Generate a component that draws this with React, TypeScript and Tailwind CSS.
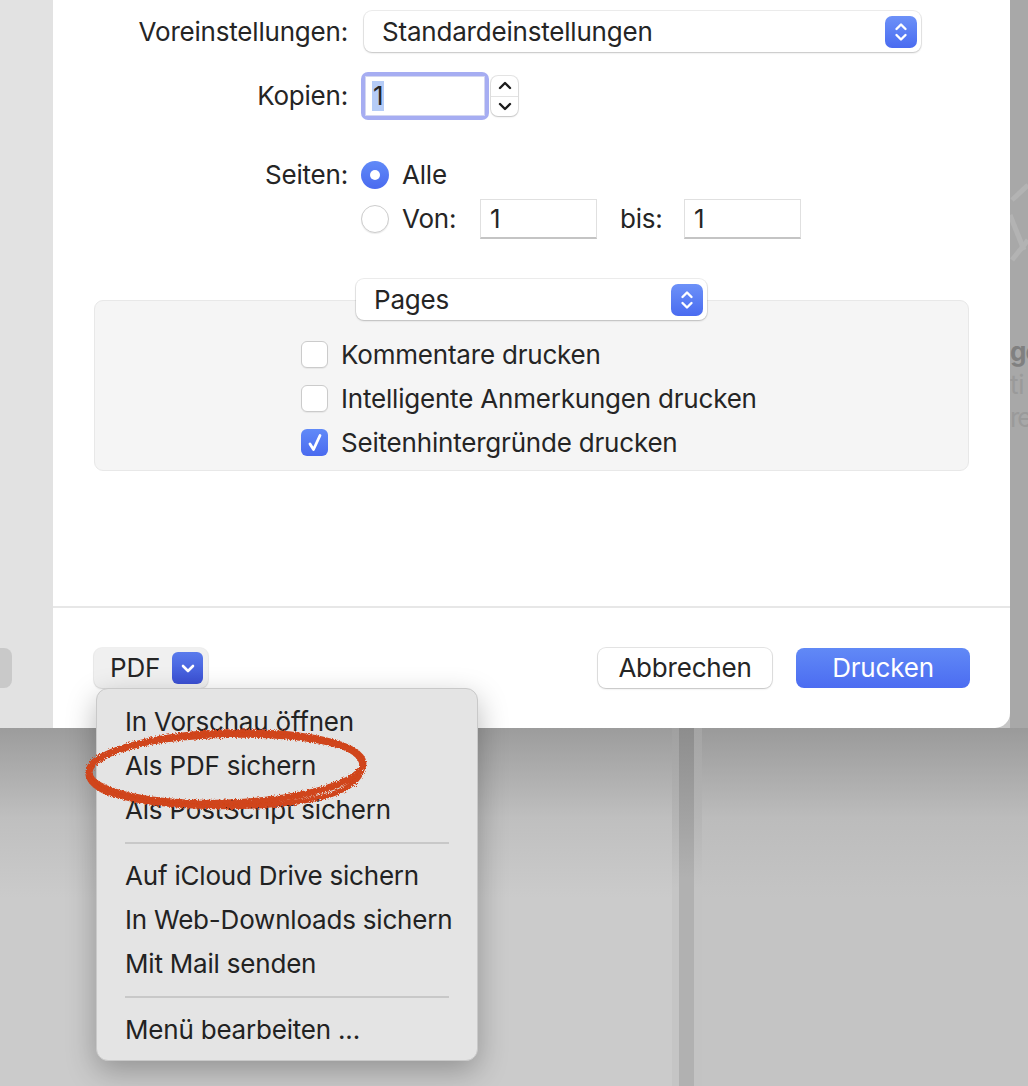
import React from 'react';

function UpDown() {
  return (
    <svg width="16" height="22" viewBox="0 0 16 22" fill="none" stroke="white" strokeWidth="2.4" strokeLinecap="round" strokeLinejoin="round">
      <path d="M3.5 8 L8 3.5 L12.5 8" />
      <path d="M3.5 14 L8 18.5 L12.5 14" />
    </svg>
  );
}

function Chevron({ up }: { up?: boolean }) {
  return (
    <svg width="14" height="9" viewBox="0 0 14 9" fill="none" stroke="#1c1c1c" strokeWidth="2.4" strokeLinecap="round" strokeLinejoin="round">
      {up ? <path d="M2 7 L7 2 L12 7" /> : <path d="M2 2 L7 7 L12 2" />}
    </svg>
  );
}

function PopupButton({ label, className }: { label: string; className: string }) {
  return (
    <div
      className={`flex h-[41px] items-center justify-between rounded-[8px] bg-white pl-[18px] pr-[4px] shadow-[0_0_0_1px_rgba(0,0,0,0.07),0_1px_2px_rgba(0,0,0,0.18)] ${className}`}
    >
      <span>{label}</span>
      <div className="flex h-[32px] w-[32px] items-center justify-center rounded-[7px] bg-gradient-to-b from-[#6d91f8] to-[#4a6bf0]">
        <UpDown />
      </div>
    </div>
  );
}

function Radio({ checked }: { checked?: boolean }) {
  if (checked) {
    return (
      <div className="flex h-[28px] w-[28px] shrink-0 items-center justify-center rounded-full bg-gradient-to-b from-[#618af8] to-[#4a6aef]">
        <div className="h-[10px] w-[10px] rounded-full bg-white" />
      </div>
    );
  }
  return (
    <div className="h-[28px] w-[28px] shrink-0 rounded-full border border-[#cdcdcd] bg-white shadow-[0_1px_1px_rgba(0,0,0,0.08)]" />
  );
}

function Checkbox({ checked }: { checked?: boolean }) {
  if (checked) {
    return (
      <div className="flex h-[27px] w-[27px] shrink-0 items-center justify-center rounded-[6px] bg-gradient-to-b from-[#618af8] to-[#4a6aef]">
        <svg width="16" height="20" viewBox="0 0 16 20" fill="none" stroke="white" strokeWidth="2.8" strokeLinecap="round" strokeLinejoin="round">
          <path d="M3 11 L6.5 16.5 L13 2.5" />
        </svg>
      </div>
    );
  }
  return <div className="h-[27px] w-[27px] shrink-0 rounded-[6px] border border-[#cbcbcb] bg-white shadow-[0_1px_1px_rgba(0,0,0,0.06)]" />;
}

function Field({ value }: { value: string }) {
  return (
    <div className="flex h-[40px] w-[117px] items-center border border-[#e0e0e0] border-b-2 border-b-[#c4c4c4] bg-white pl-[9px]">
      {value}
    </div>
  );
}

const menuGroups = [
  ['In Vorschau öffnen', 'Als PDF sichern', 'Als PostScript sichern'],
  ['Auf iCloud Drive sichern', 'In Web-Downloads sichern', 'Mit Mail senden'],
  ['Menü bearbeiten ...'],
];

export default function App() {
  return (
    <div className="relative h-[1086px] w-[1028px] overflow-hidden bg-[#c6c6c6] font-['Inter','Liberation_Sans',sans-serif] text-[26px] leading-[32px] tracking-[-0.2px] text-[#252525]">
      {/* window row */}
      <div className="flex h-[728px]">
        {/* sidebar of the window behind */}
        <div className="flex w-[53px] flex-col bg-[#e2e2e2]">
          <div className="mt-[648px] h-[40px] w-[12px] rounded-r-[8px] bg-[#c9c9c9]" />
        </div>

        {/* print dialog */}
        <div className="flex w-[957px] flex-col rounded-br-[15px] bg-white">
          <div className="flex flex-col pt-[11px]">
            <div className="flex h-[41px] items-center">
              <div className="w-[295px] text-right">Voreinstellungen:</div>
              <PopupButton label="Standardeinstellungen" className="ml-[16px] w-[557px]" />
            </div>

            <div className="mt-[20px] flex h-[48px] items-center">
              <div className="w-[295px] text-right">Kopien:</div>
              <div className="ml-[13px] rounded-[7px] bg-[#a6adf2] p-[4px]">
                <div className="flex h-[40px] w-[120px] items-center bg-white pl-[7px] shadow-[inset_0_0_0_1px_rgba(80,90,200,0.25)]">
                  <span className="bg-[#b5ccf7] px-[1px] leading-[30px]">1</span>
                </div>
              </div>
              <div className="ml-[2px] flex h-[40px] w-[27px] flex-col rounded-[7px] bg-white shadow-[0_0_0_1px_rgba(0,0,0,0.1),0_1px_2px_rgba(0,0,0,0.15)]">
                <div className="flex flex-1 items-center justify-center border-b border-[#e3e3e3]">
                  <Chevron up />
                </div>
                <div className="flex flex-1 items-center justify-center">
                  <Chevron />
                </div>
              </div>
            </div>

            <div className="mt-[41px] flex">
              <div className="w-[295px] text-right leading-[28px]">Seiten:</div>
              <div className="ml-[13px] flex flex-col">
                <div className="flex h-[28px] items-center">
                  <Radio checked />
                  <span className="ml-[13px]">Alle</span>
                </div>
                <div className="mt-[10px] flex h-[40px] items-center">
                  <Radio />
                  <span className="ml-[13px] w-[78px]">Von:</span>
                  <Field value="1" />
                  <span className="ml-[23px] w-[64px]">bis:</span>
                  <Field value="1" />
                </div>
              </div>
            </div>

            <div className="mx-[41px] mt-[40px] flex flex-col items-center">
              <PopupButton label="Pages" className="relative z-10 w-[351px] pl-[17px]" />
              <div className="-mt-[20px] flex w-full flex-col gap-[17px] rounded-[9px] border border-[#e8e8e8] bg-[#f5f5f5] pb-[14px] pl-[206px] pt-[40px]">
                <label className="flex h-[27px] items-center gap-[13px]">
                  <Checkbox />
                  <span>Kommentare drucken</span>
                </label>
                <label className="flex h-[27px] items-center gap-[13px]">
                  <Checkbox />
                  <span>Intelligente Anmerkungen drucken</span>
                </label>
                <label className="flex h-[27px] items-center gap-[13px]">
                  <Checkbox checked />
                  <span>Seitenhintergründe drucken</span>
                </label>
              </div>
            </div>
          </div>

          <div className="flex-1" />

          <div className="flex h-[122px] items-start justify-between border-t-2 border-[#e7e7e7] pl-[41px] pr-[40px] pt-[40px]">
            <div className="relative">
              <div className="flex h-[40px] w-[114px] items-center justify-between rounded-[8px] bg-[#f0f0f0] pl-[16px] pr-[5px] shadow-[0_0_0_1px_rgba(0,0,0,0.06),0_1px_2px_rgba(0,0,0,0.12)]">
                <span>PDF</span>
                <div className="flex h-[32px] w-[31px] items-center justify-center rounded-[6px] bg-gradient-to-b from-[#5a7bec] to-[#3b4fd4]">
                  <svg width="14" height="9" viewBox="0 0 14 9" fill="none" stroke="white" strokeWidth="2.6" strokeLinecap="round" strokeLinejoin="round">
                    <path d="M2 2 L7 7 L12 2" />
                  </svg>
                </div>
              </div>

              {/* open pop-up menu */}
              <div className="absolute left-[2px] top-[40px] z-20 w-[382px] rounded-[12px] border border-[#c9c9c9] bg-[#e4e4e4] pb-[8px] pt-[11px] shadow-[0_10px_30px_rgba(0,0,0,0.28)]">
                {menuGroups.map((group, gi) => (
                  <div key={gi}>
                    {gi > 0 && (
                      <div className="flex h-[22px] items-center px-[28px]">
                        <div className="h-[2px] w-full bg-[#c8c8c8]" />
                      </div>
                    )}
                    {group.map((item) => (
                      <div key={item} className="flex h-[44px] items-center whitespace-nowrap pl-[28px] text-[#222]">
                        {item}
                      </div>
                    ))}
                  </div>
                ))}
              </div>
            </div>

            <div className="flex gap-[24px]">
              <button className="h-[40px] w-[174px] rounded-[8px] bg-white shadow-[0_0_0_1px_rgba(0,0,0,0.1),0_1px_2px_rgba(0,0,0,0.15)]">
                Abbrechen
              </button>
              <button className="h-[40px] w-[174px] rounded-[8px] bg-gradient-to-b from-[#6189f6] to-[#4c6cf1] text-white">
                Drucken
              </button>
            </div>
          </div>
        </div>

        {/* edge of the window behind, mostly covered by the dialog */}
        <div className="flex w-[18px] flex-col overflow-hidden bg-[#a8a8a8] text-[#9a9a9a]">
          <svg width="18" height="300" viewBox="0 0 18 300" fill="none" stroke="#b3b3b3" strokeWidth="5">
            <path d="M2 200 L18 185" />
            <path d="M2 260 L18 240" />
            <path d="M0 215 L14 250" />
          </svg>
          <div className="mt-[36px] whitespace-nowrap font-bold tracking-[-1px] text-[#808080]">ge</div>
          <div className="mt-[1px] whitespace-nowrap">ti</div>
          <div className="mt-[1px] whitespace-nowrap tracking-[-2px]">re</div>
        </div>
      </div>

      {/* area below the dialog */}
      <div className="flex h-[358px]">
        <div className="w-[672px] bg-[linear-gradient(to_bottom,#9c9c9c_0px,#bfbfbf_90px,#cbcbcb_170px)]" />
        <div className="flex w-[30px]">
          <div className="w-[7px] bg-[linear-gradient(to_bottom,#a0a0a0_0px,#c5c5c5_160px)]" />
          <div className="w-[15px] bg-[linear-gradient(to_bottom,#8d8d8d_0px,#b1b1b1_150px)]" />
          <div className="w-[8px] bg-[linear-gradient(to_bottom,#a4a4a4_0px,#c3c3c3_160px)]" />
        </div>
        <div className="flex-1 bg-[linear-gradient(to_bottom,#9a9a9a_0px,#bcbcbc_90px,#c4c4c4_170px)]" />
      </div>

      {/* red hand drawn mark */}
      <svg className="pointer-events-none absolute left-[78px] top-[722px] z-30" width="300" height="96" viewBox="0 0 300 96">
        <defs>
          <filter id="rough" x="-10%" y="-20%" width="120%" height="140%">
            <feTurbulence type="fractalNoise" baseFrequency="1.3" numOctaves="2" seed="5" />
            <feDisplacementMap in="SourceGraphic" scale="5" />
          </filter>
        </defs>
        <g fill="none" stroke="#d0441a" strokeLinecap="round" filter="url(#rough)">
          <ellipse cx="148" cy="46" rx="137" ry="35" strokeWidth="7" transform="rotate(-2 148 46)" />
          <path d="M30 32 C 70 12, 200 6, 262 24 C 294 34, 292 60, 252 73 C 192 90, 80 88, 30 71 C -2 58, 6 36, 42 28" strokeWidth="5" />
        </g>
      </svg>
    </div>
  );
}
